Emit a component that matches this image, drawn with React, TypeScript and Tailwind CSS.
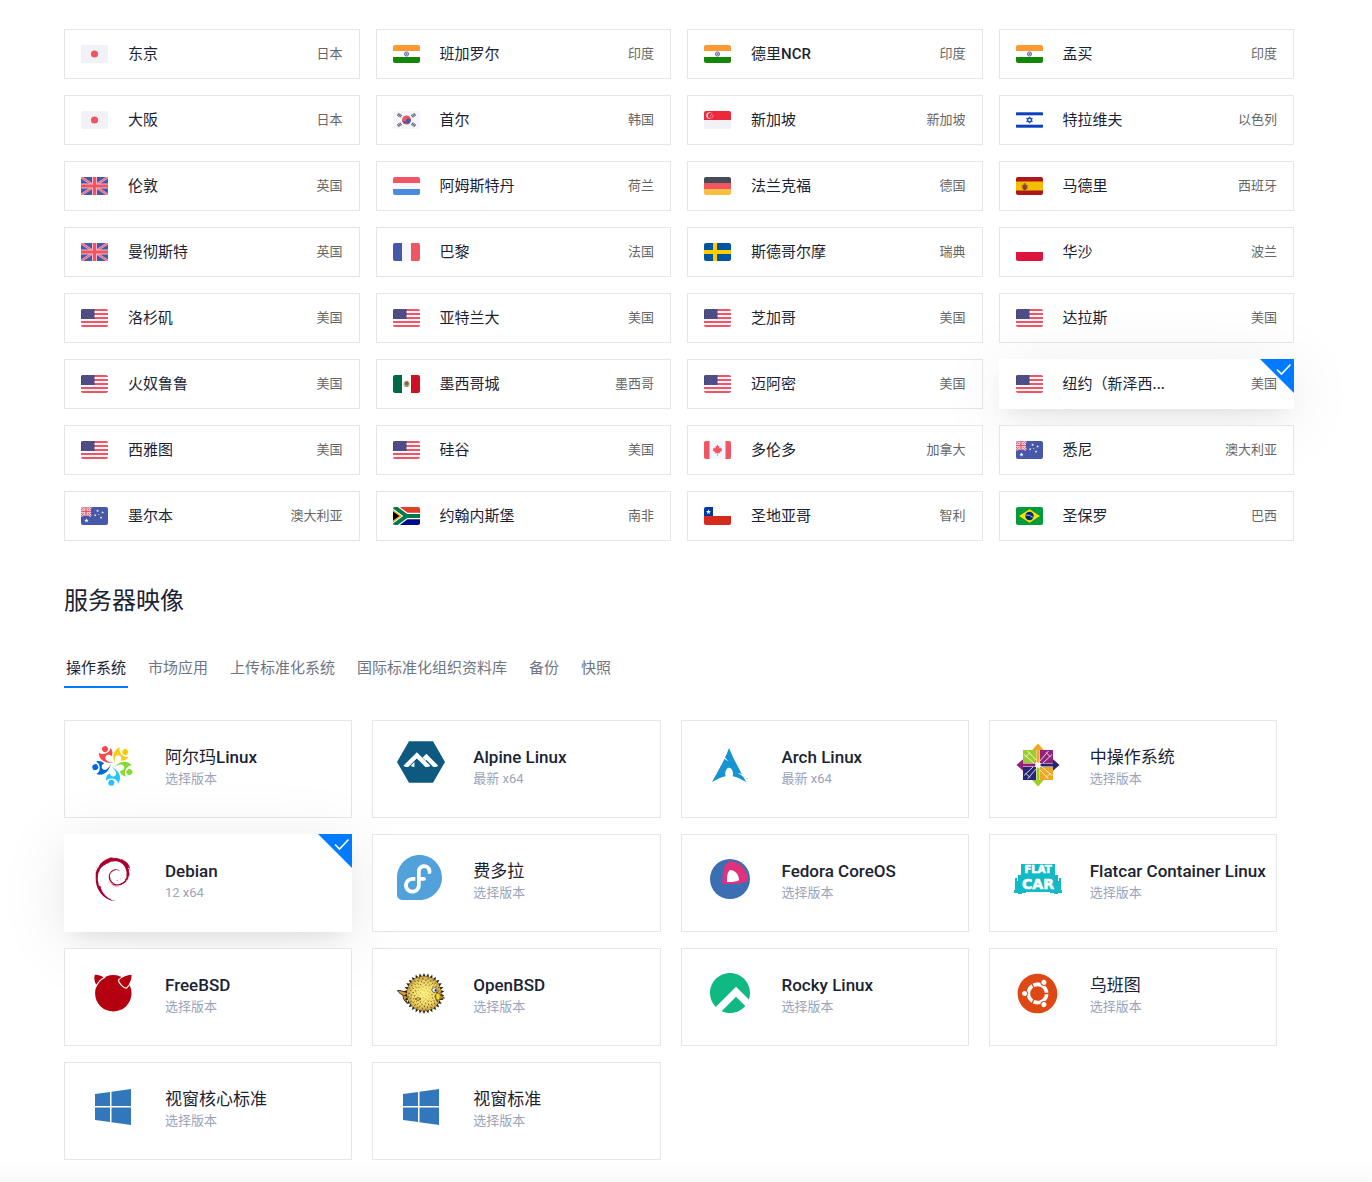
import { useState, type ReactNode } from 'react';
import { SiAlpinelinux, SiArchlinux, SiDebian, SiFedora, SiRockylinux } from 'react-icons/si';
import { FaUbuntu } from 'react-icons/fa';

/* ---------- flags ---------- */

const star = (cx: number, cy: number, r: number, points = 5, inner = 0.42) =>
  Array.from({ length: points * 2 }, (_, i) => {
    const radius = i % 2 ? r * inner : r;
    const angle = (Math.PI * i) / points - Math.PI / 2;
    return `${(cx + radius * Math.cos(angle)).toFixed(2)},${(cy + radius * Math.sin(angle)).toFixed(2)}`;
  }).join(' ');

function HorizontalBands({ colors }: { colors: string[] }) {
  const h = 18 / colors.length;
  return (
    <>
      {colors.map((c, i) => (
        <rect key={i} x="0" y={i * h} width="27" height={h} fill={c} />
      ))}
    </>
  );
}

function VerticalBands({ colors }: { colors: string[] }) {
  return (
    <>
      {colors.map((c, i) => (
        <rect key={i} x={i * 9} y="0" width="9" height="18" fill={c} />
      ))}
    </>
  );
}

const flags: Record<string, ReactNode> = {
  jp: (
    <>
      <rect width="27" height="18" fill="#f1f2f7" />
      <circle cx="13.5" cy="9" r="3.6" fill="#ef5562" />
    </>
  ),
  in: (
    <>
      <HorizontalBands colors={['#ff9933', '#ffffff', '#138808']} />
      <circle cx="13.5" cy="9" r="2.1" fill="#c9c9e6" stroke="#5a5aae" strokeWidth="0.9" />
      <circle cx="13.5" cy="9" r="0.8" fill="#5a5aae" />
    </>
  ),
  kr: (
    <>
      <rect width="27" height="18" fill="#f5f6fb" />
      <circle cx="13.5" cy="9" r="4.5" fill="#ef5562" />
      <path d="M9.3 7.5a2.2 2.2 0 0 0 4.2 1.5a2.2 2.2 0 0 1 4.3 1.2a4.5 4.5 0 0 1-8.5-2.7z" fill="#4858a9" />
      <g stroke="#5f646e" strokeWidth="1.1">
        <path d="M4.3 4.7l2-2.6M5.5 5.6l2-2.6M6.7 6.5l2-2.6" />
        <path d="M22.7 4.7l-2-2.6M21.5 5.6l-2-2.6M20.3 6.5l-2-2.6" />
        <path d="M4.3 13.3l2 2.6M5.5 12.4l2 2.6M6.7 11.5l2 2.6" />
        <path d="M22.7 13.3l-2 2.6M21.5 12.4l-2 2.6M20.3 11.5l-2 2.6" />
      </g>
    </>
  ),
  sg: (
    <>
      <HorizontalBands colors={['#ee283b', '#f1f2f7']} />
      <circle cx="5.5" cy="4.6" r="3.3" fill="#fbd5d9" />
      <circle cx="6.8" cy="4.6" r="2.9" fill="#ee283b" />
      <g fill="#fbd5d9">
        <circle cx="7.6" cy="3" r="0.5" />
        <circle cx="6.3" cy="4.2" r="0.5" />
        <circle cx="9" cy="4.2" r="0.5" />
        <circle cx="6.9" cy="5.9" r="0.5" />
        <circle cx="8.5" cy="5.9" r="0.5" />
      </g>
    </>
  ),
  il: (
    <>
      <rect width="27" height="18" fill="#ffffff" />
      <rect y="1.3" width="27" height="3" fill="#0f3fbf" />
      <rect y="13.7" width="27" height="3" fill="#0f3fbf" />
      <path d="M13.5 5.8l2.8 4.8h-5.6zM13.5 12.2l2.8-4.8h-5.6z" fill="none" stroke="#0f3fbf" strokeWidth="1" />
    </>
  ),
  gb: (
    <>
      <rect width="27" height="18" fill="#4858a9" />
      <path d="M0 0l27 18M27 0L0 18" stroke="#e8b4c6" strokeWidth="2.4" />
      <path d="M0 0l27 18M27 0L0 18" stroke="#ef6576" strokeWidth="1.2" />
      <path d="M13.5 0v18M0 9h27" stroke="#f7b9c4" strokeWidth="5" />
      <path d="M13.5 0v18M0 9h27" stroke="#ef5562" strokeWidth="3" />
    </>
  ),
  nl: <HorizontalBands colors={['#ef5562', '#f5f6fb', '#4a8adf']} />,
  de: <HorizontalBands colors={['#464b57', '#ef5562', '#f8bf3f']} />,
  es: (
    <>
      <rect width="27" height="18" fill="#ae161c" />
      <rect y="4.5" width="27" height="9" fill="#f3bd02" />
      <path d="M5.5 7.5h1v4.5h-1zM11 7.5h1v4.5h-1z" fill="#c98a3a" />
      <path d="M6.6 8h4.3v3a2.1 2.1 0 0 1-4.3 0z" fill="#8f3a1d" />
      <circle cx="8.8" cy="7.2" r="1.2" fill="#b4582a" />
      <circle cx="10.2" cy="10" r="0.9" fill="#5b5b63" />
    </>
  ),
  fr: <VerticalBands colors={['#4858a9', '#f5f6fb', '#ef5562']} />,
  se: (
    <>
      <rect width="27" height="18" fill="#00559f" />
      <path d="M11 0v18M0 9h27" stroke="#ffcd00" strokeWidth="4" />
    </>
  ),
  pl: <HorizontalBands colors={['#ffffff', '#dc143c']} />,
  us: (
    <>
      <rect width="27" height="18" fill="#f5f6fb" />
      {[0, 4, 8, 12, 16].map((y) => (
        <rect key={y} y={y} width="27" height="2" fill="#ef5562" />
      ))}
      <rect width="13.5" height="10" fill="#46467f" />
      {[1, 3, 5, 7, 9].map((y, r) => (
        <path key={y} d={`M${1 + (r % 2)} ${y}H13`} stroke="#6c6ca0" strokeWidth="0.9" strokeDasharray="1 1" />
      ))}
    </>
  ),
  mx: (
    <>
      <VerticalBands colors={['#006847', '#ffffff', '#ce1126']} />
      <circle cx="13.5" cy="9" r="2.8" fill="#d9d6bd" stroke="#b9bf9a" strokeWidth="1" />
      <path d="M11.6 7.2l3-1.2 1.4 2.8-1.6 2-2.4-.8z" fill="#8a6239" />
      <path d="M11.6 10.8q2 1.6 4 0" fill="none" stroke="#5f8f6c" strokeWidth="0.9" />
    </>
  ),
  ca: (
    <>
      <rect width="27" height="18" fill="#f5f6fb" />
      <rect width="5.5" height="18" fill="#ef5562" />
      <rect x="21.5" width="5.5" height="18" fill="#ef5562" />
      <path
        d="M13.5 3.6l1 1.900 1-.4-.4 2.500 1.300-1.100.3.9 1.400-.1-.5 1.500.6.5-2.700 2.200.2.9-2-.3.1 2.600h-.7l.1-2.600-2 .3.2-.9-2.700-2.200.6-.5-.5-1.500 1.400.1.3-.9 1.300 1.100-.4-2.500 1 .4z"
        fill="#ef5562"
      />
    </>
  ),
  au: (
    <>
      <rect width="27" height="18" fill="#4858a9" />
      <rect width="10" height="9" fill="#6e74b4" />
      <path d="M0 0l10 9M10 0L0 9" stroke="#fbd9de" strokeWidth="2.4" />
      <path d="M0 0l10 9M10 0L0 9" stroke="#ef5562" strokeWidth="1" />
      <path d="M5 0v9M0 4.5h10" stroke="#fbe4e8" strokeWidth="2.8" />
      <path d="M5 0v9M0 4.5h10" stroke="#ef5562" strokeWidth="1.4" />
      <g fill="#f5f6fb">
        <polygon points={star(5.5, 13.6, 2.2)} />
        <polygon points={star(16.6, 3.8, 1.5)} />
        <polygon points={star(14.2, 8.2, 1.4)} />
        <polygon points={star(21.6, 5.4, 1.5)} />
        <polygon points={star(20, 10.6, 1.4)} />
        <circle cx="17.8" cy="7.5" r="0.5" />
      </g>
    </>
  ),
  za: (
    <>
      <HorizontalBands colors={['#e23d28', '#000c8a']} />
      <path d="M0-1L13.500 9L0 19M12 9H27" stroke="#ffffff" strokeWidth="6.400" fill="none" />
      <path d="M0-1L13.500 9L0 19M12 9H27" stroke="#007a4d" strokeWidth="4" fill="none" />
      <path d="M-1 3L7.500 9L-1 15Z" fill="#000000" stroke="#ffb612" strokeWidth="1.300" />
    </>
  ),
  cl: (
    <>
      <HorizontalBands colors={['#ffffff', '#d52b1e']} />
      <rect width="9" height="9" fill="#0039a6" />
      <polygon points={star(4.5, 4.8, 2.6)} fill="#ffffff" />
    </>
  ),
  br: (
    <>
      <rect width="27" height="18" fill="#009b3a" />
      <path d="M13.5 2.2L24 9L13.500 15.800L3 9z" fill="#fedf00" />
      <circle cx="13.5" cy="9" r="4.200" fill="#002776" />
      <path d="M9.600 8q4.200-.6 7.600 2.600" fill="none" stroke="#b9d0d8" strokeWidth="0.900" />
    </>
  ),
};

function Flag({ code }: { code: string }) {
  return (
    <svg viewBox="0 0 27 18" aria-hidden="true" className="h-[18px] w-[27px] shrink-0 overflow-hidden rounded-xs">
      {flags[code]}
    </svg>
  );
}

/* ---------- system logos ---------- */

function AlmaLogo() {
  const people: [string, number][] = [
    ['#ff4649', -30],
    ['#ffcb12', 40],
    ['#86da2f', 110],
    ['#24c2ff', 182],
    ['#0069da', 260],
  ];
  return (
    <svg viewBox="-24 -24 48 48" className="size-12">
      {people.map(([color, angle]) => (
        <g key={color} fill={color} transform={`rotate(${angle})`}>
          <circle cx="1" cy="-17.800" r="3" />
          <path d="M1.500-2C-5.500-4.500-10-11.500-6-18C-5-15-2.500-13.500 1-13.500C3.500-13.500 5-14.500 6.500-16C7-12.500 5.500-9.500 3-8.500C2.600-10 1.500-11.500-.5-11.500C-5-11-4.500-5.500 1.500-2Z" />
        </g>
      ))}
    </svg>
  );
}

function CentosLogo() {
  const parts: [string, string, number][] = [
    ['#9ccd2a', '#efa724', 0],
    ['#932279', '#262577', 90],
    ['#efa724', '#9ccd2a', 180],
    ['#262577', '#932279', 270],
  ];
  return (
    <svg viewBox="-24 -24 48 48" className="size-12">
      {parts.map(([square, arrow, angle]) => (
        <g key={angle} transform={`rotate(${angle})`}>
          <rect x="-15" y="-15" width="13" height="13" fill={square} />
          <path d="M-14-10.500L-3.500-1.500M-10.500-14L-1.500-4.500M-12.500-8L-8-12.500" stroke="#ffffff" strokeWidth="0.800" fill="none" />
          <path d="M0-21.500L5.800-15H1.600V-3L0-1.500L-1.600-3V-15H-5.800Z" fill={arrow} />
        </g>
      ))}
      <circle r="2.600" fill="#ffffff" />
    </svg>
  );
}

function CoreosLogo() {
  return (
    <svg viewBox="0 0 40 40" className="size-10">
      <circle cx="20" cy="20" r="20" fill="#3c6eb4" />
      <path d="M19.500 2.300C29 2.300 37 9.500 38 20.500C38.200 24 28 25.500 12.500 25C12 15 14 4 19.500 2.300Z" fill="#e0327c" />
      <path d="M20 11C25.500 11.500 29 16 29 21.300C27 22.600 22 23.200 17 23C16.800 17 17.500 13 20 11Z" fill="#ffffff" />
    </svg>
  );
}

function FlatcarLogo() {
  return (
    <svg viewBox="0 0 48 30" className="h-[30px] w-12">
      <path
        d="M7 0H41V11H44V17H45V14H47V26H48V29H44V30H40V29H36V28H12V29H8V30H4V29H0V26H1V14H3V17H4V11H7Z"
        fill="#12bac8"
      />
      <g fill="#ffffff" stroke="#ffffff" strokeWidth="0.600" textAnchor="middle" className="font-['DejaVu_Sans'] font-bold">
        <text x="24" y="9" fontSize="10">FLAT</text>
        <text x="24" y="25" fontSize="14">CAR</text>
      </g>
    </svg>
  );
}

function FreebsdLogo() {
  return (
    <svg viewBox="0 0 39 38" className="h-[38px] w-[39px]" fill="#b5010f">
      <circle cx="19.300" cy="19.300" r="18.200" />
      <g stroke="#ffffff" strokeWidth="1.200">
        <path d="M.3.300C3.500-.5 8.500 1.500 10.600 3.500C6.500 5.500 4 8.500 2.300 12C-.3 8.500-.6 3.500.3.300Z" />
        <path d="M38 .300C38.800 4 36 11.500 32.600 14C30 14.500 24.300 9 24.500 6C26.500 3 34.500-.6 38 .300Z" />
      </g>
    </svg>
  );
}

function PufferLogo() {
  const dots = Array.from({ length: 90 }, (_, i) => {
    const r = 16 * Math.sqrt((i + 0.5) / 90);
    const a = i * 2.39996;
    return [27 + r * Math.cos(a), 20.5 + r * Math.sin(a)] as const;
  });
  return (
    <svg viewBox="0 0 48 41" className="h-[41px] w-12">
      <defs>
        <radialGradient id="puffer-body">
          <stop offset="0" stopColor="#fdf280" />
          <stop offset="0.7" stopColor="#efd768" />
          <stop offset="1" stopColor="#c9a043" />
        </radialGradient>
      </defs>
      <path d="M10 19C6 19 4 17 .5 17.500C2 20 4 21.500 6 22C6 25 7 28 9.500 29.500C9 26 10 25 12 24Z" fill="#d59a37" stroke="#2d2410" strokeWidth="0.900" />
      <polygon points={star(27, 20.5, 20.5, 30, 0.82)} fill="#2d2410" />
      <circle cx="27" cy="20.500" r="17.200" fill="url(#puffer-body)" />
      {dots.map(([x, y], i) => (
        <path
          key={i}
          d={`M${x.toFixed(2)} ${y.toFixed(2)}l${((x - 27) * 0.08).toFixed(2)} ${((y - 20.5) * 0.08).toFixed(2)}`}
          stroke="#55431b"
          strokeWidth="0.800"
          strokeLinecap="round"
          opacity={i < 20 ? 0.4 : 1}
        />
      ))}
      <path d="M18 26q3-3 6 0q-3 3-6 0z" fill="#e5c455" stroke="#5d4717" strokeWidth="0.700" />
      <path d="M40 19l7.500 6-8 2.500q-2.500-4 .5-8.500z" fill="#c98e2f" stroke="#2d2410" strokeWidth="0.700" />
      <ellipse cx="37.500" cy="17" rx="2.600" ry="2.200" fill="#ffffff" stroke="#2d2410" strokeWidth="0.600" />
      <circle cx="38.500" cy="17.300" r="1" fill="#1b1b1b" />
      <ellipse cx="41" cy="23.500" rx="2.200" ry="3.400" fill="#f4dc33" stroke="#6b5411" strokeWidth="0.500" />
    </svg>
  );
}

function WindowsLogo() {
  return (
    <svg viewBox="0 0 36 36" className="size-9" fill="#3277bc">
      <path d="M0 5L15 3V17H0ZM16.500 2.700L36 0V17H16.500ZM0 18.500H15V33L0 31ZM16.500 18.500H36V36L16.500 33.300Z" />
    </svg>
  );
}

/* ---------- data ---------- */

const regions: [string, string, string][] = [
  ['jp', '东京', '日本'],
  ['in', '班加罗尔', '印度'],
  ['in', '德里NCR', '印度'],
  ['in', '孟买', '印度'],
  ['jp', '大阪', '日本'],
  ['kr', '首尔', '韩国'],
  ['sg', '新加坡', '新加坡'],
  ['il', '特拉维夫', '以色列'],
  ['gb', '伦敦', '英国'],
  ['nl', '阿姆斯特丹', '荷兰'],
  ['de', '法兰克福', '德国'],
  ['es', '马德里', '西班牙'],
  ['gb', '曼彻斯特', '英国'],
  ['fr', '巴黎', '法国'],
  ['se', '斯德哥尔摩', '瑞典'],
  ['pl', '华沙', '波兰'],
  ['us', '洛杉矶', '美国'],
  ['us', '亚特兰大', '美国'],
  ['us', '芝加哥', '美国'],
  ['us', '达拉斯', '美国'],
  ['us', '火奴鲁鲁', '美国'],
  ['mx', '墨西哥城', '墨西哥'],
  ['us', '迈阿密', '美国'],
  ['us', '纽约（新泽西...', '美国'],
  ['us', '西雅图', '美国'],
  ['us', '硅谷', '美国'],
  ['ca', '多伦多', '加拿大'],
  ['au', '悉尼', '澳大利亚'],
  ['au', '墨尔本', '澳大利亚'],
  ['za', '约翰内斯堡', '南非'],
  ['cl', '圣地亚哥', '智利'],
  ['br', '圣保罗', '巴西'],
];

const tabs = ['操作系统', '市场应用', '上传标准化系统', '国际标准化组织资料库', '备份', '快照'];

const images: { name: string; version: string; logo: ReactNode }[] = [
  { name: '阿尔玛Linux', version: '选择版本', logo: <AlmaLogo /> },
  {
    name: 'Alpine Linux',
    version: '最新 x64',
    logo: <SiAlpinelinux viewBox="0 1.5 24 21" className="h-[42px] w-12 self-start text-[#0d597f]" />,
  },
  { name: 'Arch Linux', version: '最新 x64', logo: <SiArchlinux className="size-9 text-[#1793d1]" /> },
  { name: '中操作系统', version: '选择版本', logo: <CentosLogo /> },
  { name: 'Debian', version: '12 x64', logo: <SiDebian className="size-11 text-[#a80030]" /> },
  { name: '费多拉', version: '选择版本', logo: <SiFedora className="mr-auto size-[45px] self-start text-[#51a2da]" /> },
  { name: 'Fedora CoreOS', version: '选择版本', logo: <CoreosLogo /> },
  { name: 'Flatcar Container Linux', version: '选择版本', logo: <FlatcarLogo /> },
  { name: 'FreeBSD', version: '选择版本', logo: <FreebsdLogo /> },
  { name: 'OpenBSD', version: '选择版本', logo: <PufferLogo /> },
  { name: 'Rocky Linux', version: '选择版本', logo: <SiRockylinux className="size-10 text-[#10b981]" /> },
  { name: '乌班图', version: '选择版本', logo: <FaUbuntu className="size-[41px] text-[#dd4814]" /> },
  { name: '视窗核心标准', version: '选择版本', logo: <WindowsLogo /> },
  { name: '视窗标准', version: '选择版本', logo: <WindowsLogo /> },
];

/* ---------- page ---------- */

/* Latin runs are set in medium weight, Chinese runs stay regular. */
function MixedLabel({ text }: { text: string }) {
  return (
    <>
      {text.split(/([A-Za-z][A-Za-z ]*|\.+)/).map((part, i) =>
        i % 2 ? (
          <span key={i} className="font-medium">
            {part}
          </span>
        ) : (
          part
        ),
      )}
    </>
  );
}

function SelectedCorner() {
  return (
    <svg viewBox="0 0 34 34" aria-hidden="true" className="absolute -top-px -right-px size-[34px]">
      <path d="M0 0H34V34Z" fill="#007bff" />
      <path d="M17 10.500L21.500 15L30.500 5.500" fill="none" stroke="#ffffff" strokeWidth="1.600" />
    </svg>
  );
}

const idle = 'border border-[#e4e7ea]';
const active = 'border border-white shadow-[0_10px_20px_-8px_rgba(0,0,0,0.09),0_10px_70px_rgba(0,0,0,0.09)]';

export default function App() {
  const [region, setRegion] = useState(23);
  const [tab, setTab] = useState(0);
  const [image, setImage] = useState(4);

  return (
    <main className="bg-white font-[Roboto,'Noto_Sans_CJK_SC',sans-serif] text-[#1b2333]">
      <div className="pt-[29px] pr-[78px] pl-16">
        <section aria-label="服务器位置" className="grid grid-cols-4 gap-4">
          {regions.map(([code, city, country], i) => (
            <button
              key={city}
              type="button"
              aria-pressed={region === i}
              onClick={() => setRegion(i)}
              className={`relative flex h-[50px] items-center bg-white px-4 ${region === i ? active : idle}`}
            >
              <Flag code={code} />
              <span className="ml-5 flex-1 text-left text-[15px] leading-5">
                <MixedLabel text={city} />
              </span>
              <span className="text-[13px] leading-5 text-[#666666]">{country}</span>
              {region === i && <SelectedCorner />}
            </button>
          ))}
        </section>

        <h2 className="mt-11 text-2xl leading-8">服务器映像</h2>

        <div role="tablist" className="mt-8 flex gap-[18px]">
          {tabs.map((label, i) => (
            <button
              key={label}
              type="button"
              role="tab"
              aria-selected={tab === i}
              onClick={() => setTab(i)}
              className={`border-b-2 px-0.5 pt-[9px] pb-[7px] text-[15px] leading-[21px] ${
                tab === i ? 'border-[#007bff]' : 'border-transparent text-[#6e7582]'
              }`}
            >
              {label}
            </button>
          ))}
        </div>

        <section aria-label="操作系统" className="mt-8 grid grid-cols-4 gap-x-5 gap-y-4 pr-[17px]">
          {images.map(({ name, version, logo }, i) => (
            <button
              key={name}
              type="button"
              aria-pressed={image === i}
              onClick={() => setImage(i)}
              className={`relative flex h-[98px] items-start bg-white pl-6 text-left ${image === i ? active : idle}`}
            >
              <span aria-hidden="true" className="mt-5 flex size-12 shrink-0 items-center justify-center">
                {logo}
              </span>
              <span className="mt-6 ml-7 flex flex-col">
                <span className="text-[17px] leading-6 whitespace-nowrap">
                  <MixedLabel text={name} />
                </span>
                <span className="text-[13px] leading-5 text-[#9aa4bb]">{version}</span>
              </span>
              {image === i && <SelectedCorner />}
            </button>
          ))}
        </section>
      </div>
      <div className="h-[22px] bg-linear-to-b from-white to-[#fafafa]" />
    </main>
  );
}
